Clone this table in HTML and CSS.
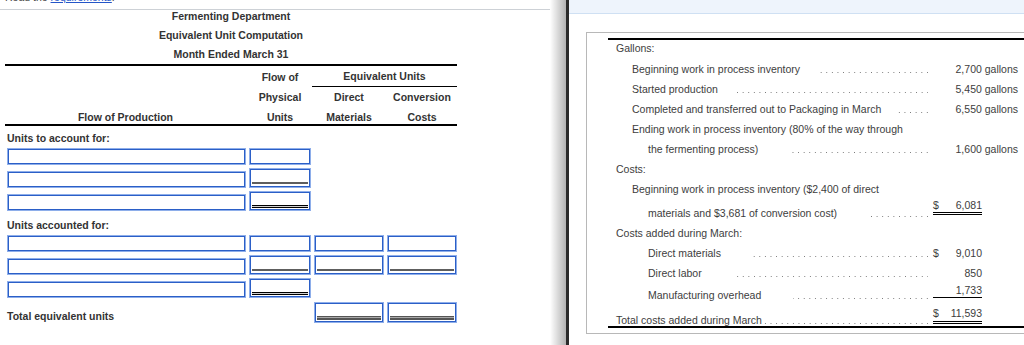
FILE: index.html
```html
<!DOCTYPE html>
<html lang="en">
<head>
<meta charset="utf-8">
<title>Fermenting Department</title>
<link rel="stylesheet" href="styles.css">
</head>
<body>
<div class="page">
  <section class="left">
    <div class="note"><span>Read the <a href="#">requirements</a>.</span></div>
    <div class="rule"></div>
    <div class="sheet">
      <div class="title">
        <div>Fermenting Department</div>
        <div>Equivalent Unit Computation</div>
        <div>Month Ended March 31</div>
      </div>
      <div class="head">
        <div class="c2 r1">Flow of</div>
        <div class="eu">Equivalent Units</div>
        <div class="c2 r2">Physical</div>
        <div class="c3 r2">Direct</div>
        <div class="c4 r2">Conversion</div>
        <div class="c1 r3">Flow of Production</div>
        <div class="c2 r3">Units</div>
        <div class="c3 r3">Materials</div>
        <div class="c4 r3">Costs</div>
      </div>

      <div class="label l1">Units to account for:</div>
      <div class="rows">
        <div class="row"><input class="in wide" type="text"><input class="in" type="text"></div>
        <div class="row"><input class="in wide" type="text"><input class="in single" type="text"></div>
        <div class="row"><input class="in wide" type="text"><input class="in double" type="text"></div>
      </div>

      <div class="label l2">Units accounted for:</div>
      <div class="rows">
        <div class="row"><input class="in wide" type="text"><input class="in" type="text"><input class="in" type="text"><input class="in" type="text"></div>
        <div class="row"><input class="in wide" type="text"><input class="in single" type="text"><input class="in single" type="text"><input class="in single" type="text"></div>
        <div class="row"><input class="in wide" type="text"><input class="in double" type="text"></div>
        <div class="row total-row"><div class="tot-label">Total equivalent units</div><span></span><input class="in total" type="text"><input class="in total" type="text"></div>
      </div>
    </div>
  </section>
  <div class="shade"></div>
  <div class="bar"></div>
  <section class="right">
    <div class="band"></div>
    <div class="box">
      <div class="data">
        <div class="r first"><span class="lab lv0">Gallons:</span></div>
        <div class="r"><span class="lab lv1">Beginning work in process inventory</span><span class="dots"></span><span class="amt">2,700 gallons</span></div>
        <div class="r"><span class="lab lv1">Started production</span><span class="dots"></span><span class="amt">5,450 gallons</span></div>
        <div class="r"><span class="lab lv1">Completed and transferred out to Packaging in March</span><span class="dots"></span><span class="amt">6,550 gallons</span></div>
        <div class="r"><span class="lab lv1">Ending work in process inventory (80% of the way through</span></div>
        <div class="r"><span class="lab lv2">the fermenting process)</span><span class="dots far"></span><span class="amt">1,600 gallons</span></div>
        <div class="r"><span class="lab lv0">Costs:</span></div>
        <div class="r"><span class="lab lv1">Beginning work in process inventory ($2,400 of direct</span></div>
        <div class="r h24"><span class="lab lv2">materials and $3,681 of conversion cost)</span><span class="dots far"></span><span class="amt top"><span class="money dbl m13"><span>$</span><span>6,081</span></span></span></div>
        <div class="r"><span class="lab lv0">Costs added during March:</span></div>
        <div class="r"><span class="lab lv2">Direct materials</span><span class="dots far"></span><span class="amt"><span class="money"><span>$</span><span>9,010</span></span></span></div>
        <div class="r"><span class="lab lv2">Direct labor</span><span class="dots far"></span><span class="amt"><span class="money"><span></span><span>850</span></span></span></div>
        <div class="r h22"><span class="lab lv2">Manufacturing overhead</span><span class="dots far"></span><span class="amt top"><span class="money sgl m14"><span></span><span>1,733</span></span></span></div>
        <div class="r totals"><span class="lab lv0">Total costs added during March</span><span class="dots near"></span><span class="amt top"><span class="money dbl m16"><span>$</span><span>11,593</span></span></span></div>
      </div>
    </div>
  </section>
</div>
</body>
</html>
```

FILE: styles.css
```css
html, body {
  margin: 0;
  padding: 0;
  background: #fff;
}
body {
  font-family: "Liberation Sans", Arial, sans-serif;
  font-size: 10.5px;
  color: #333;
}
.page {
  display: flex;
  height: 345px;
  overflow: hidden;
}

/* ---------- left panel ---------- */
.left {
  flex: 0 0 550px;
  overflow: hidden;
}
.note {
  height: 9px;
  overflow: hidden;
}
.note span {
  display: block;
  margin-top: -9px;
  line-height: 12px;
  padding-left: 5px;
  color: #444;
}
.note a {
  color: #2456c8;
}
.rule {
  height: 1px;
  background: #cdd1d6;
}
.sheet {
  width: 452px;
  margin-left: 5px;
  font-weight: bold;
  color: #333;
}
.title {
  margin-top: -3px;
  line-height: 19px;
  text-align: center;
  border-bottom: 2px solid #000;
}
.head {
  display: grid;
  grid-template-columns: 241px 62px 70px 70px;
  grid-template-rows: 20px 20px 17px;
  column-gap: 3px;
  line-height: 20px;
  text-align: center;
  padding-top: 1px;
  border-bottom: 2px solid #000;
}
.c1 { grid-column: 1; }
.c2 { grid-column: 2; }
.c3 { grid-column: 3; }
.c4 { grid-column: 4; }
.r1 { grid-row: 1; }
.r2 { grid-row: 2; }
.r3 { grid-row: 3; }
.eu {
  grid-column: 3 / 5;
  grid-row: 1;
  margin-left: -2px;
  line-height: 19px;
  border-bottom: 1px solid #000;
}
.label {
  line-height: 20px;
  padding-left: 2px;
}
.l1 { padding-top: 2px; }
.l2 { padding-top: 4px; }
.rows {
  display: grid;
  row-gap: 3px;
}
.row {
  display: grid;
  grid-template-columns: 241px 62px 70px 70px;
  column-gap: 3px;
  align-items: end;
}
.total-row {
  margin-top: 1px;
}
.tot-label {
  line-height: 14px;
  padding-left: 2px;
}
.in {
  display: block;
  box-sizing: border-box;
  width: calc(100% - 2px);
  height: 15px;
  margin: 1px;
  padding: 0;
  border: 1px solid #2b5fc7;
  box-shadow: 0 0 0 1px #8eaeea;
  background: #fff;
  font: inherit;
  outline: none;
}
.in.wide {
  margin-left: 3px;
  width: calc(100% - 4px);
}
.in.single {
  height: 18px;
  background: #fff linear-gradient(#5e5e5e, #5e5e5e) no-repeat 1px calc(100% - 2px) / calc(100% - 2px) 2px;
}
.in.double {
  height: 18px;
  background:
    linear-gradient(#000, #000) no-repeat 1px calc(100% - 1px) / calc(100% - 2px) 1px,
    linear-gradient(#cfcfcf, #cfcfcf) no-repeat 1px calc(100% - 2px) / calc(100% - 2px) 1px,
    linear-gradient(#000, #000) no-repeat 1px calc(100% - 3px) / calc(100% - 2px) 1px,
    #fff;
}
.in.total {
  height: 19px;
  background: #fff linear-gradient(to bottom, #555 0 1px, #a8a8a8 1px 2px, #555 2px 4px) no-repeat 1px calc(100% - 1px) / calc(100% - 2px) 4px;
}

/* ---------- divider ---------- */
.shade {
  flex: 0 0 16px;
  background: linear-gradient(to right, rgba(0, 0, 0, 0), rgba(0, 0, 0, 0.3));
}
.bar {
  flex: 0 0 3px;
  background: #2a2a2a;
}

/* ---------- right panel ---------- */
.right {
  flex: 1;
  min-width: 0;
  overflow: hidden;
  color: #3d3d3d;
}
.band {
  height: 13px;
  background: #eef4fc;
  border-bottom: 1px solid #cfe0f3;
}
.box {
  width: 430px;
  margin: 18px 0 0 17px;
  padding: 5px 20px 5px 21px;
  border: 1px solid #b8b8b8;
}
.data {
  padding-right: 20px;
  border-top: 2px solid #000;
  border-bottom: 2px solid #000;
}
.r {
  display: flex;
  align-items: flex-end;
  height: 20px;
  line-height: 20px;
  white-space: nowrap;
}
.r.first {
  height: 19px;
  line-height: 16px;
  align-items: flex-start;
}
.r.h24 { height: 24px; }
.r.h22 { height: 22px; }
.r.totals { height: 21px; }
.r.totals .lab { line-height: 12px; }
.lab { flex: none; }
.lv0 { padding-left: 8px; }
.lv1 { padding-left: 24px; }
.lv2 { padding-left: 40px; }
.dots {
  flex: 1;
  align-self: stretch;
  margin-left: 16px;
  background-image: linear-gradient(to left, #7a7a7a 0 1px, transparent 1px);
  background-size: 5.6px 1px;
  background-repeat: repeat-x;
  background-position: right 0 bottom 6px;
}
.dots.far { margin-left: 32px; }
.dots.near {
  margin-left: 0;
  background-position: right 0 bottom 2px;
}
.amt {
  flex: none;
  width: 85px;
  margin-left: 5px;
  text-align: right;
}
.amt.top { align-self: flex-start; }
.money {
  display: flex;
  justify-content: space-between;
  width: 49px;
}
.money.m13 { line-height: 13px; }
.money.m14 { line-height: 14px; }
.money.m16 { line-height: 16px; }
.money.dbl { border-bottom: 3px double #000; }
.money.sgl { border-bottom: 1px solid #000; }
```
